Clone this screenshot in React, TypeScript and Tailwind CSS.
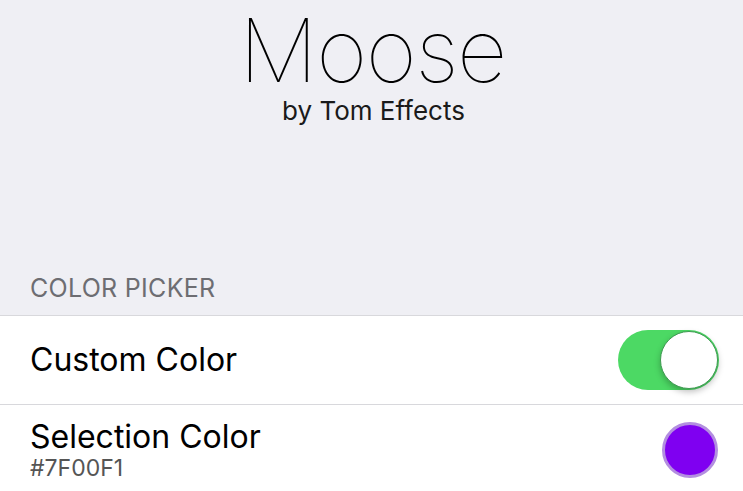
import { useState } from "react";

const font = { fontFamily: "Inter, 'Noto Sans', sans-serif" };

const App = () => {
  const [custom, setCustom] = useState(true);

  return (
    <div className="w-[743px] h-[491px] overflow-hidden bg-[#efeff4] flex flex-col" style={font}>
      {/* header */}
      <div className="flex flex-col items-center pt-[4px] ml-[2px]">
        <h1 className="text-[88px] leading-[92px] font-thin text-black tracking-[-1.5px]">Moose</h1>
        <p className="text-[26px] leading-[30px] text-[#1a1a1a] mt-[0px] ml-[2px]">by Tom Effects</p>
      </div>

      {/* section */}
      <div className="mt-[147px] px-[30px] text-[25px] leading-[30px] text-[#6d6d72] tracking-[0.3px]">COLOR PICKER</div>

      <div className="mt-[12px] flex-1 bg-white border-t border-[#d8d8dc]">
        <div className="flex items-center justify-between pl-[30px] pr-[24px] h-[89px] border-b border-[#d8d8dc]">
          <span className="text-[32px] text-black">Custom Color</span>
          <button
            onClick={() => setCustom(!custom)}
            className={`relative w-[101px] h-[60px] rounded-full transition-colors ${custom ? "bg-[#4cd964]" : "bg-[#e5e5ea]"}`}
          >
            <span
              className={`absolute top-[1px] w-[58px] h-[58px] rounded-full bg-white border border-[#3f9a52] shadow-[0_3px_6px_rgba(0,0,0,0.25)] ${custom ? "right-[1px]" : "left-[1px]"}`}
            />
          </button>
        </div>
        <div className="flex items-center justify-between pl-[30px] pr-[25px] h-[90px]">
          <div className="flex flex-col">
            <span className="text-[32px] leading-[36px] text-black">Selection Color</span>
            <span className="text-[23px] leading-[26px] text-[#555]">#7F00F1</span>
          </div>
          <div className="w-[56px] h-[56px] rounded-full bg-[#7f00f1] border-[3px] border-[#b38ee0]" />
        </div>
      </div>
    </div>
  );
};

export default App;
